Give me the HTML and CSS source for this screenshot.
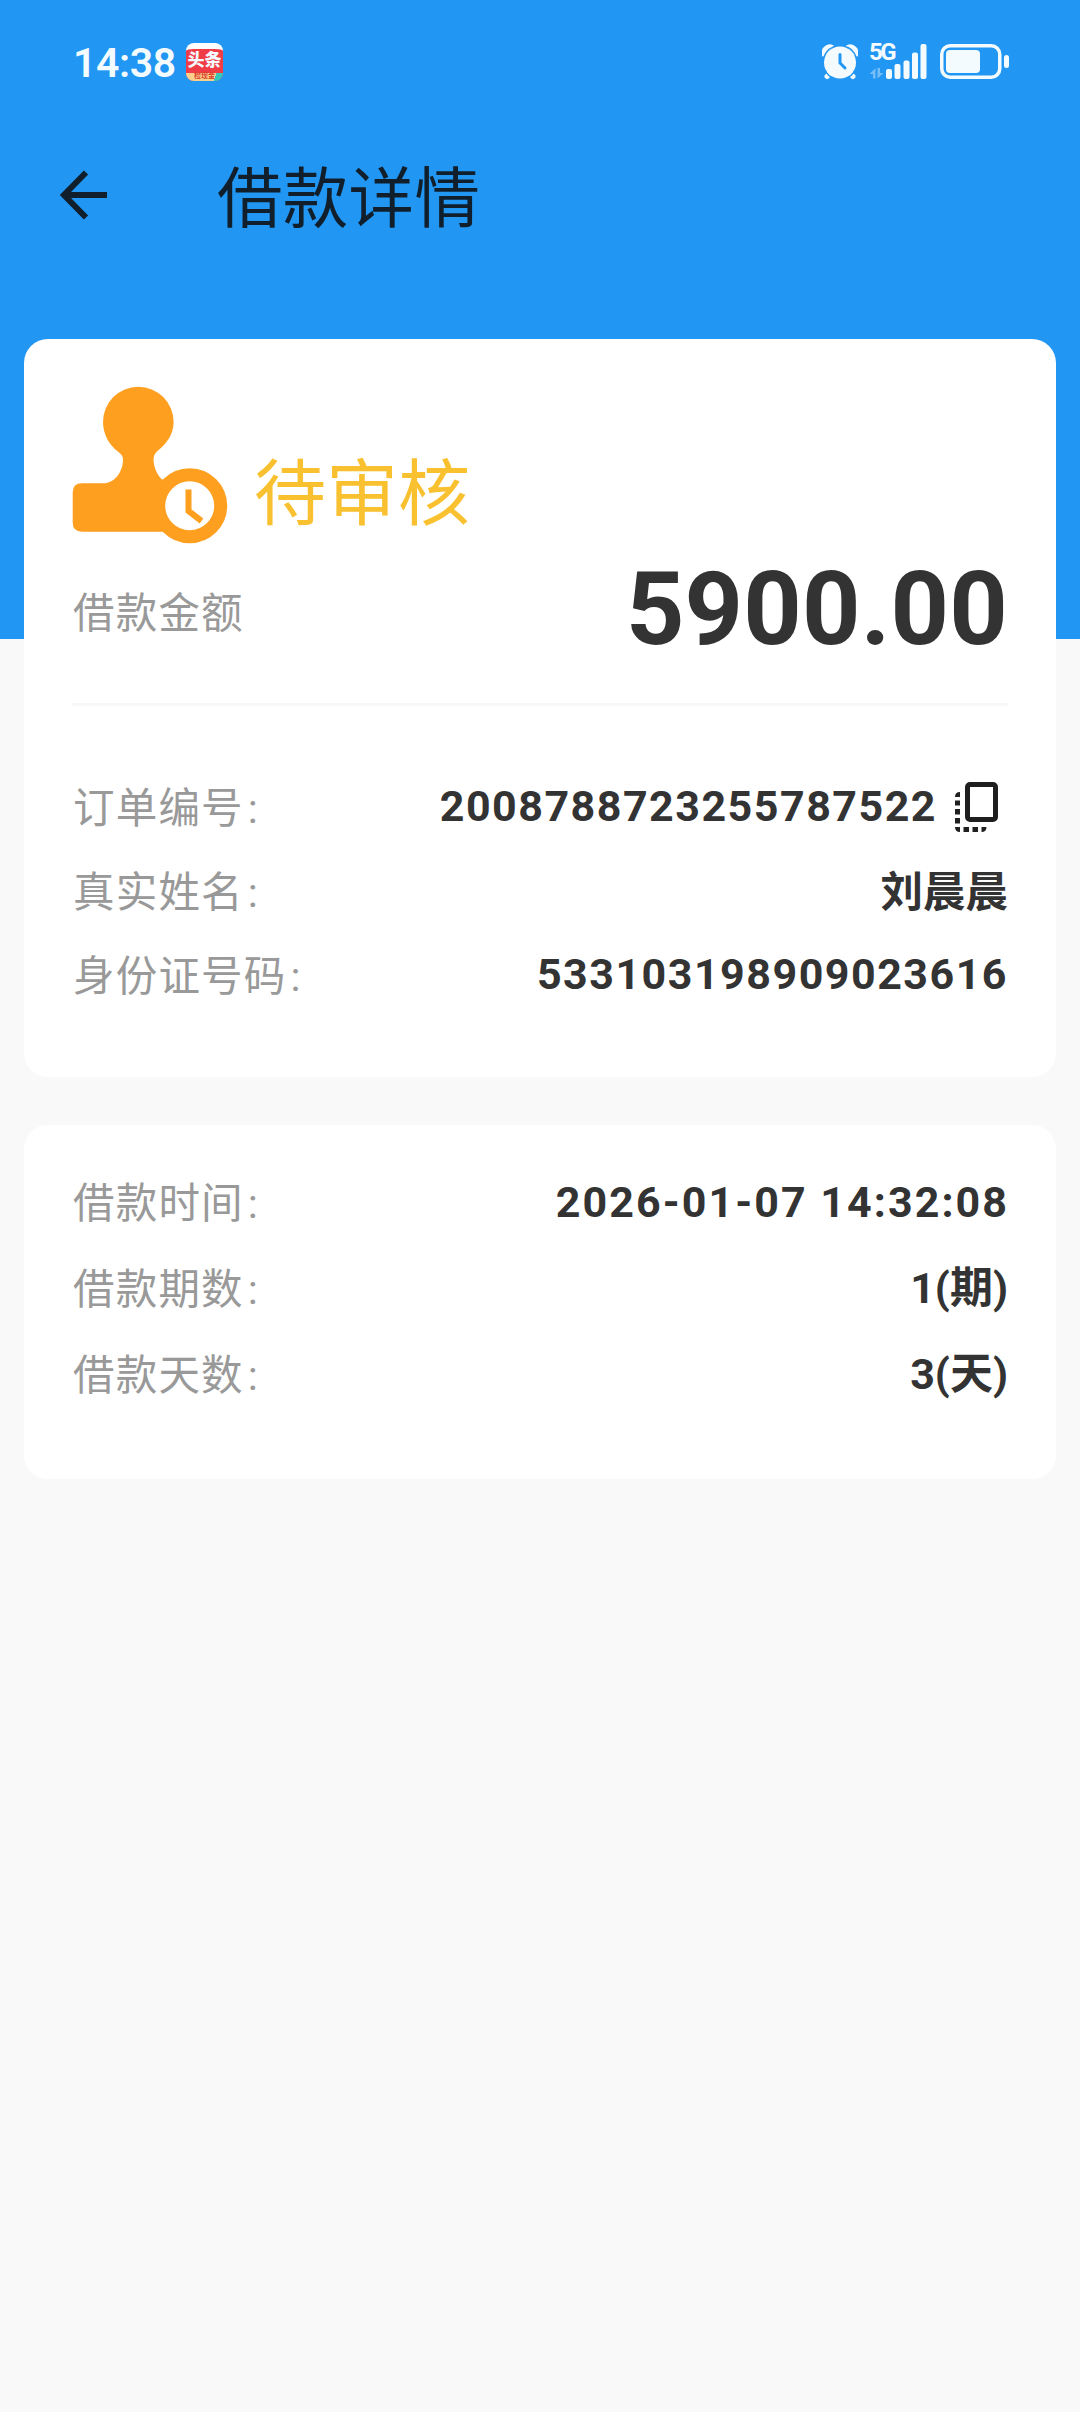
FILE: index.html
```html
<!DOCTYPE html>
<html lang="zh-CN">
  <head>
    <meta charset="UTF-8" />
    <meta name="viewport" content="width=device-width, initial-scale=1.0" />
    <title>借款详情</title>
    <link rel="stylesheet" href="styles.css">
  </head>
  <body>
    <header class="header">
      <!-- Status bar -->
      <div class="status-bar">
        <span class="time">14:38</span>
        <div class="news-icon">
          <span class="news-name">头条</span>
          <span class="news-tag">检现金</span>
        </div>
        <svg class="alarm" width="36" height="36" viewBox="0 0 36 36">
          <g stroke="#f4fbff" stroke-width="5" stroke-linecap="round">
            <path d="M9 28l-4 4.500M27 28l4 4.500" />
          </g>
          <path d="M1 12a7.500 7.500 0 0 1 10-10zM35 12a7.500 7.500 0 0 0-10-10z" fill="#f4fbff" stroke="#f4fbff" stroke-width="1.500" stroke-linejoin="round" />
          <circle cx="18" cy="18.500" r="17" fill="none" stroke="#2196f3" stroke-width="1.500" stroke-dasharray="40 13.400" stroke-dashoffset="-33.500" />
          <circle cx="18" cy="18.500" r="16" fill="#f4fbff" />
          <path d="M18 10.500v8.500l5 5" fill="none" stroke="#2196f3" stroke-width="3" stroke-linecap="round" />
        </svg>
        <div class="signal">
          <span class="network">5G</span>
          <svg width="58" height="36" viewBox="0 0 58 36">
            <g fill="#f4fbff">
              <rect x="17" y="25" width="6" height="10" rx="2" />
              <rect x="25.500" y="20" width="6" height="15" rx="2" />
              <rect x="34.500" y="16.500" width="6" height="18.500" rx="2" />
              <rect x="43" y="8.500" width="6" height="26.500" rx="2" />
              <rect x="51.500" y="0" width="6" height="35" rx="2" />
            </g>
            <path d="M6.500 24v10.500H4V30H0.500zM8.500 34.500V24H11v5h3.500z" fill="#f4fbff" opacity="0.4" />
          </svg>
        </div>
        <svg class="battery" width="70" height="36" viewBox="0 0 70 36">
          <rect x="1.750" y="1.750" width="58" height="31.500" rx="8.500" fill="none" stroke="#f4fbff" stroke-width="3.500" />
          <rect x="6" y="6" width="34" height="23" rx="4" fill="#f4fbff" />
          <rect x="64" y="11" width="5" height="13" rx="2.500" fill="#f4fbff" />
        </svg>
      </div>

      <!-- App bar -->
      <div class="app-bar">
        <svg width="48" height="50" viewBox="0 0 48 50">
          <path d="M47 25H5M26 2.500L4 25l22 22.500" fill="none" stroke="#101f2b" stroke-width="6" />
        </svg>
        <h1>借款详情</h1>
      </div>
    </header>

    <main class="content">
      <section class="card loan-card">
        <div class="loan-status">
          <svg width="156" height="158" viewBox="0 0 156 158">
            <path d="M46.500 66C38 60 31 49 31 36a35.300 35.300 0 0 1 70.600 0C101.600 49 94 58 86 64.500Q81.500 68 81.500 74C82 83 86 91 93 96V145.700H10Q0.700 145.700 0.700 136.500V106.500Q0.700 97.300 10 97.300H31C44 97.300 51 84 51 74Q51 69 46.500 66z" fill="#ff9f1f" />
            <path d="M90 93.500L118 95V145.700H90z" fill="#ff9f1f" />
            <circle cx="117.700" cy="119.700" r="31" fill="#fff" stroke="#ff9f1f" stroke-width="13" />
            <path d="M116.500 103.500V125L129.500 135" fill="none" stroke="#ff9f1f" stroke-width="6" />
          </svg>
          <span class="status-text">待审核</span>
        </div>
        <div class="row amount-row">
          <span class="label">借款金额</span>
          <span class="amount">5900.00</span>
        </div>
        <hr class="divider">
        <div class="row">
          <span class="label">订单编号<i>:</i></span>
          <span class="value order-no">
            <span class="number">2008788723255787522</span>
            <svg width="44" height="50" viewBox="0 0 44 50">
              <rect x="12.500" y="2.500" width="28" height="35" rx="2.500" fill="none" stroke="#1f1f1f" stroke-width="5" />
              <path d="M5 10v5H0q0-5 5-5zM0 18.500h5v5H0zM0 27h5v5.500H0zM0 36h5v5.500H0zM0 45h5v5q-5 0-5-5zM8.500 45H14v5H8.500zM17.500 45h5.500v5h-5.500zM26.500 45h5q0 5-5 5z" fill="#1f1f1f" />
            </svg>
          </span>
        </div>
        <div class="row">
          <span class="label">真实姓名<i>:</i></span>
          <span class="value name">刘晨晨</span>
        </div>
        <div class="row">
          <span class="label">身份证号码<i>:</i></span>
          <span class="value number">533103198909023616</span>
        </div>
      </section>

      <section class="card term-card">
        <div class="row">
          <span class="label">借款时间<i>:</i></span>
          <span class="value date">2026-01-07 14:32:08</span>
        </div>
        <div class="row">
          <span class="label">借款期数<i>:</i></span>
          <span class="value term">1(期)</span>
        </div>
        <div class="row">
          <span class="label">借款天数<i>:</i></span>
          <span class="value term">3(天)</span>
        </div>
      </section>
    </main>
  </body>
</html>
```

FILE: styles.css
```css
* {
  box-sizing: border-box;
}

body {
  margin: 0;
  min-height: 2412px;
  background-color: #f9f9f9;
  font-family: Roboto, "Noto Sans CJK SC", sans-serif;
  color: #333;
}

svg {
  display: block;
  flex-shrink: 0;
}

.header {
  height: 639px;
  background-color: #2196f3;
}

/* Status bar */
.status-bar {
  display: flex;
  align-items: center;
  height: 124px;
  padding: 0 70px 0 73px;
  color: #f4fbff;
}

.time {
  width: 113px;
  padding-top: 1px;
  font-size: 41px;
  font-weight: 600;
  letter-spacing: -0.4px;
  line-height: 48px;
}

.news-icon {
  display: flex;
  flex-direction: column;
  width: 37px;
  height: 38px;
  padding-top: 1px;
  overflow: hidden;
  border-top: 6px solid #fff;
  border-radius: 8px;
  background-color: #f03c46;
  text-align: center;
}

.news-name {
  height: 23px;
  font-size: 17px;
  line-height: 21px;
  font-weight: 900;
  white-space: nowrap;
}

.news-tag {
  height: 8px;
  background: linear-gradient(110deg, #fbd08c 76%, #35c8b8 77%);
  color: #d8402c;
  font-size: 7px;
  line-height: 7px;
  font-weight: 700;
}

.alarm {
  margin-left: auto;
  margin-right: 11px;
}

.signal {
  position: relative;
  margin-right: 13px;
}

.network {
  position: absolute;
  left: 0;
  top: -1px;
  font-size: 24px;
  line-height: 18px;
  font-weight: 700;
  letter-spacing: -2.500px;
}

/* App bar */
.app-bar {
  display: flex;
  align-items: center;
  height: 142px;
  padding-left: 60px;
}

.app-bar h1 {
  margin: 0 0 0 109px;
  padding-top: 9px;
  font-size: 65.5px;
  line-height: 80px;
  font-weight: 400;
  letter-spacing: 0.3px;
  color: #101f2b;
}

/* Cards */
.content {
  display: flex;
  flex-direction: column;
  gap: 48px;
  margin-top: -300px;
  padding: 0 24px;
}

.card {
  padding: 0 48px;
  border-radius: 24px;
  background-color: #fff;
}

.loan-card {
  height: 738px;
  padding-top: 47px;
}

.term-card {
  height: 354px;
  padding-top: 34px;
}

.loan-status {
  display: flex;
  height: 158px;
}

.status-text {
  margin-left: 26px;
  padding-top: 64px;
  font-size: 72px;
  line-height: 90px;
  color: #f9c02f;
}

.row {
  display: flex;
  align-items: center;
  justify-content: space-between;
  height: 84px;
}

.term-card .row {
  height: 86px;
}

.amount-row {
  height: 136px;
}

.label {
  padding: 3px 0 0 1px;
  font-size: 41.5px;
  line-height: 60px;
  letter-spacing: 1.2px;
  color: #999;
}

.label i {
  margin-left: 4px;
  font-style: normal;
}

.amount {
  padding-bottom: 6px;
  font-size: 102px;
  line-height: 120px;
  font-weight: 700;
  letter-spacing: 0.2px;
}

.divider {
  height: 3px;
  margin: 23px 0 59px;
  border: 0;
  background-color: #f8f8f8;
}

.value {
  font-size: 43px;
  line-height: 60px;
  font-weight: 700;
  letter-spacing: 1.5px;
}

.number {
  padding-bottom: 3px;
}

.order-no {
  display: flex;
  align-items: center;
  gap: 18px;
  margin-right: 9px;
}

.name {
  padding-top: 3px;
  font-size: 42.5px;
  letter-spacing: 0;
}

.date {
  letter-spacing: 2.05px;
  margin-right: -1px;
}

.term {
  padding-bottom: 1px;
  letter-spacing: 0;
}
```
